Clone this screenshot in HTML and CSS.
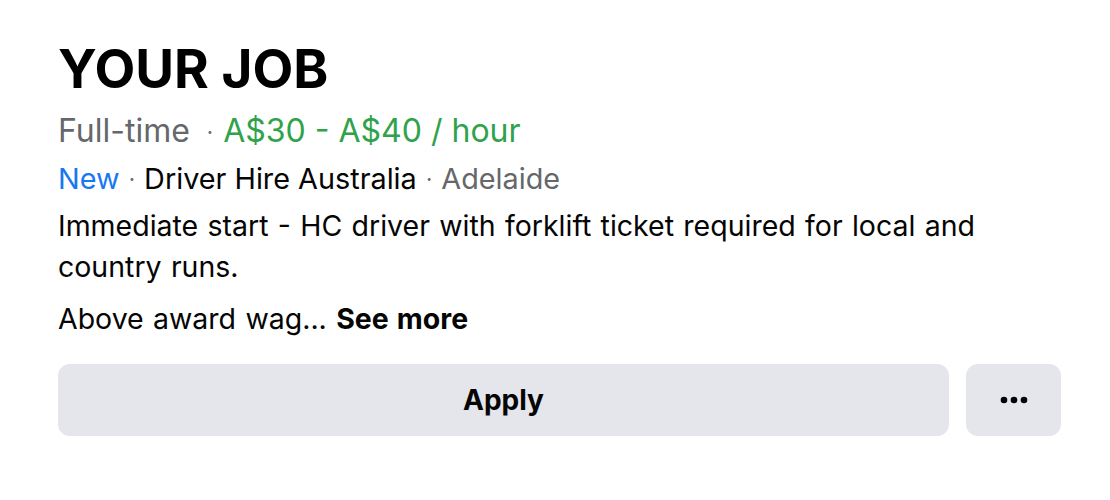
FILE: index.html
```html
<!DOCTYPE html>
<html lang="en">
<head>
    <meta charset="UTF-8">
    <title>Your Job</title>
    <link rel="stylesheet" href="styles.css">
</head>
<body>
    <div class="job-card">
        <h1 class="job-title">YOUR JOB</h1>

        <div class="job-pay">
            <span class="muted">Full-time</span>
            <span class="dot wide">·</span>
            <span class="salary">A$30 - A$40 / hour</span>
        </div>

        <div class="job-meta">
            <span class="new">New</span>
            <span class="dot">·</span>
            <span>Driver Hire Australia</span>
            <span class="dot">·</span>
            <span class="muted">Adelaide</span>
        </div>

        <p class="job-desc">Immediate start - HC driver with forklift ticket required for local and country runs.</p>
        <p class="job-desc more">Above award wag... <b>See more</b></p>

        <div class="job-actions">
            <button class="btn btn-apply">Apply</button>
            <button class="btn btn-more" aria-label="More">
                <svg width="28" height="8" viewBox="0 0 28 8">
                    <circle cx="4" cy="4" r="3.3" fill="#050505"/>
                    <circle cx="14" cy="4" r="3.3" fill="#050505"/>
                    <circle cx="24" cy="4" r="3.3" fill="#050505"/>
                </svg>
            </button>
        </div>
    </div>
</body>
</html>
```

FILE: styles.css
```css
/* Style général */
body {
    font-family: Inter, "Noto Sans", Arial, sans-serif;
    background: #ffffff;
    color: #050505;
    margin: 0;
    padding: 0;
}

.job-card {
    padding: 38px 49px 0 58px;
}

.job-title {
    font-size: 53px;
    line-height: 62px;
    font-weight: 700;
    color: #000;
    margin: 0;
}

.job-pay {
    margin-top: 11px;
    font-size: 32px;
    line-height: 40px;
}

.job-meta {
    margin-top: 9px;
    font-size: 28.8px;
    line-height: 36px;
}

.muted {
    color: #65676b;
}

.salary {
    color: #31a24c;
}

.new {
    color: #1877f2;
}

.dot {
    color: #65676b;
    font-size: 22px;
    vertical-align: 2px;
    margin: 0 1px;
}

.dot.wide {
    margin-left: 8px;
}

.job-desc {
    font-size: 28.5px;
    line-height: 41px;
    word-spacing: 1.3px;
    margin: 8px 0 0;
}

.job-desc.more {
    margin-top: 11px;
}

.job-desc b {
    font-weight: 700;
}

.job-actions {
    display: flex;
    gap: 17px;
    margin-top: 25px;
}

.btn {
    height: 72px;
    border: none;
    border-radius: 12px;
    background-color: #e4e6eb;
    color: #050505;
    font-family: inherit;
    font-size: 28px;
    font-weight: 700;
    cursor: pointer;
}

.btn-apply {
    flex: 1;
}

.btn-more {
    width: 95px;
    display: flex;
    align-items: center;
    justify-content: center;
}
```
